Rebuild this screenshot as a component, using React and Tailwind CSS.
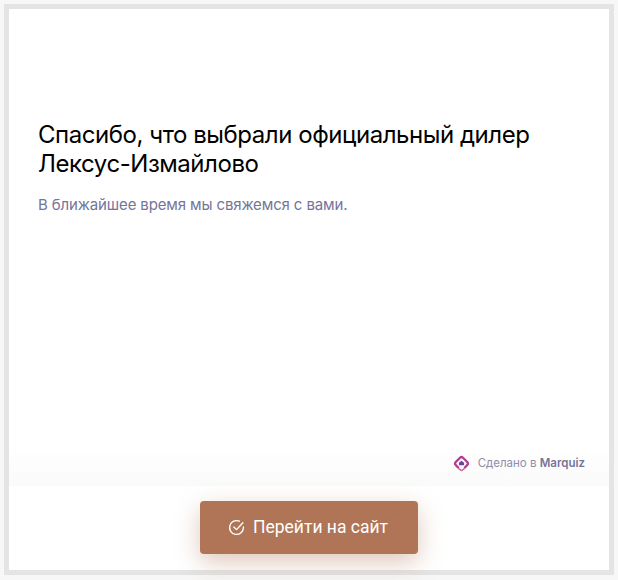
import React from "react";

function MarquizLogo() {
  return (
    <svg width="17" height="17" viewBox="0 0 16 16" fill="none">
      <path d="M4.8 11.8 2.6 9.4a2 2 0 0 1 0-2.8L6.6 2.6a2 2 0 0 1 2.8 0l4 4a2 2 0 0 1 0 2.8l-2.2 2.4" stroke="#b23d92" strokeWidth="2.2" strokeLinecap="round" />
      <path d="M5.6 13 8 14.6 10.4 13" stroke="#d8639a" strokeWidth="1.4" strokeLinecap="round" strokeLinejoin="round" />
      <path d="M5.6 9.6V7.4L8 5.4l2.4 2v2.2Z" fill="#6d3f9e" />
    </svg>
  );
}

export default function App() {
  return (
    <div className="h-[580px] w-[618px] bg-[#f7f7f7] p-1">
      <div className="flex h-[571px] flex-col border-[5px] border-[#e4e4e4] bg-white">
        <div className="flex flex-1 flex-col bg-gradient-to-b from-white from-[92%] to-[#fafafa] pr-[24px] pl-[29px]">
          <h1 className="mt-[111px] font-['Inter',sans-serif] text-[24px] leading-[29px] tracking-[-0.45px] text-black">
            Спасибо, что выбрали официальный дилер
            <br />
            Лексус-Измайлово
          </h1>
          <p className="mt-[16px] font-['Inter',sans-serif] text-[15px] leading-[22px] tracking-[-0.13px] text-[#74759a]">
            В ближайшее время мы свяжемся с вами.
          </p>
          <div className="mt-auto mb-[14px] flex items-center justify-end gap-[8px] font-['Inter',sans-serif] text-[11.5px] text-[#8d8ea8]">
            <MarquizLogo />
            <span>
              Сделано в <span className="font-semibold text-[#74759a]">Marquiz</span>
            </span>
          </div>
        </div>
        <div className="flex h-[84px] items-start justify-center pt-[15px]">
          <button className="flex h-[53px] w-[218px] items-center justify-center gap-[8px] rounded-[4px] bg-[#b07556] pr-[2px] font-['Roboto',sans-serif] text-[17.5px] text-white shadow-[0_8px_24px_rgba(176,117,86,0.4)]">
            <svg width="17" height="17" viewBox="0 0 16 16" fill="none" stroke="white" strokeWidth="1.3" strokeLinecap="round" strokeLinejoin="round">
              <path d="M14.5 7.5V8a6.5 6.5 0 1 1-3.8-5.9" />
              <path d="M5.5 7.5 8 10l6-6.5" />
            </svg>
            Перейти на сайт
          </button>
        </div>
      </div>
    </div>
  );
}
